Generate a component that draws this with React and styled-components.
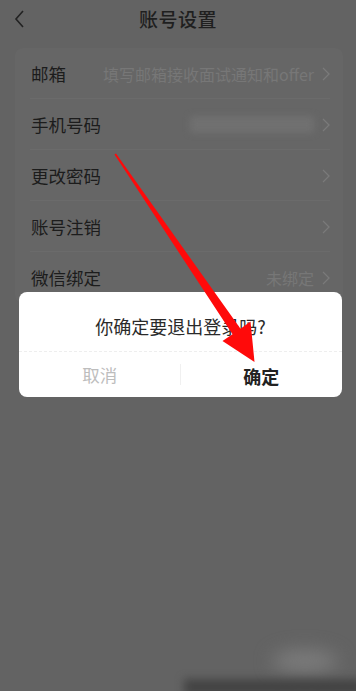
import React from "react";
import styled, { createGlobalStyle } from "styled-components";

const Global = createGlobalStyle`
  html, body { margin: 0; padding: 0; background: #636363; }
  body { font-family: "Noto Sans CJK SC", "Noto Sans", sans-serif; }
  * { box-sizing: border-box; }
`;

const Page = styled.div`
  position: relative;
  width: 356px;
  height: 691px;
  overflow: hidden;
  background: #636363;
`;

const Header = styled.div`
  height: 37px;
  display: flex;
  align-items: center;
  justify-content: center;
  position: relative;
`;

const Back = styled.div`
  position: absolute;
  left: 13px;
  top: 9px;
  width: 14px;
  height: 20px;
  display: flex;
`;

const Title = styled.div`
  font-size: 19px;
  font-weight: 500;
  color: #1f1f1f;
  letter-spacing: 0.5px;
`;

const Card = styled.div`
  margin: 11px 13px 0 15px;
  background: #666666;
  border-radius: 8px;
`;

const Row = styled.div`
  height: 51px;
  display: flex;
  align-items: center;
  padding: 0 13px 0 16px;
  position: relative;
  &:not(:last-child)::after {
    content: "";
    position: absolute;
    left: 15px;
    right: 13px;
    bottom: 0;
    height: 1px;
    background: #6b6b6b;
  }
`;

const Label = styled.div`
  flex: 1;
  font-size: 17.5px;
  color: #1c1c1c;
`;

const Value = styled.div`
  font-size: 16px;
  color: #777;
  margin-right: 8px;
  white-space: nowrap;
`;

const Blur = styled.div`
  width: 124px;
  height: 17px;
  background: #707070;
  border-radius: 2px;
  filter: blur(3px);
  margin-right: 8px;
`;

const Chevron = styled.svg`
  width: 8px;
  height: 14px;
  flex: none;
`;

const Dialog = styled.div`
  position: absolute;
  left: 19px;
  top: 292px;
  width: 323px;
  height: 105px;
  background: #fff;
  border-radius: 8px;
  display: flex;
  flex-direction: column;
`;

const DialogText = styled.div`
  height: 60px;
  padding-top: 22px;
  text-align: center;
  font-size: 18px;
  line-height: 24px;
  color: #2a2a2a;
  border-bottom: 1px dashed #eeeeee;
`;

const Buttons = styled.div`
  flex: 1;
  display: grid;
  grid-template-columns: 1fr 1fr;
  position: relative;
  &::before {
    content: "";
    position: absolute;
    left: 161px;
    top: 12px;
    bottom: 12px;
    width: 1px;
    background: #f0f0f0;
  }
`;

const Btn = styled.div`
  display: flex;
  align-items: center;
  justify-content: center;
  font-size: ${(p) => (p.$primary ? "18px" : "17.5px")};
  color: ${(p) => (p.$primary ? "#222" : "#bdbdbd")};
  font-weight: ${(p) => (p.$primary ? 700 : 400)};
  padding-top: ${(p) => (p.$primary ? "2px" : "0")};
`;

const Arrow = styled.svg`
  position: absolute;
  left: 0;
  top: 0;
  width: 356px;
  height: 691px;
  pointer-events: none;
`;

const Watermark = styled.div`
  position: absolute;
  left: 272px;
  top: 650px;
  width: 66px;
  height: 22px;
  border-radius: 50%;
  background: #7c7c7c;
  filter: blur(9px);
`;

const BottomShade = styled.div`
  position: absolute;
  left: 184px;
  bottom: -4px;
  width: 180px;
  height: 16px;
  background: #444;
  filter: blur(4px);
`;

const Chev = () => (
  <Chevron viewBox="0 0 8 14">
    <path d="M1 1 L7 7 L1 13" fill="none" stroke="#7a7a7a" strokeWidth="1.3" />
  </Chevron>
);

export default function App() {
  return (
    <Page>
      <Global />
      <Header>
        <Back>
          <svg viewBox="0 0 14 20" width="14" height="20">
            <path d="M10 2 L3 10 L10 18" fill="none" stroke="#222" strokeWidth="1.6" />
          </svg>
        </Back>
        <Title>账号设置</Title>
      </Header>
      <Card>
        <Row>
          <Label>邮箱</Label>
          <Value>填写邮箱接收面试通知和offer</Value>
          <Chev />
        </Row>
        <Row>
          <Label>手机号码</Label>
          <Blur />
          <Chev />
        </Row>
        <Row>
          <Label>更改密码</Label>
          <Chev />
        </Row>
        <Row>
          <Label>账号注销</Label>
          <Chev />
        </Row>
        <Row>
          <Label>微信绑定</Label>
          <Value>未绑定</Value>
          <Chev />
        </Row>
      </Card>
      <Dialog>
        <DialogText>你确定要退出登录吗?</DialogText>
        <Buttons>
          <Btn>取消</Btn>
          <Btn $primary>确定</Btn>
        </Buttons>
      </Dialog>
      <Watermark />
      <BottomShade />
      <Arrow viewBox="0 0 356 691">
        <polygon
          points="114.5,154.5 116,153.5 240.5,328.8 250.5,321.5 254.5,362 222.5,341 232.5,334.2"
          fill="#ff0a0a"
        />
      </Arrow>
    </Page>
  );
}
